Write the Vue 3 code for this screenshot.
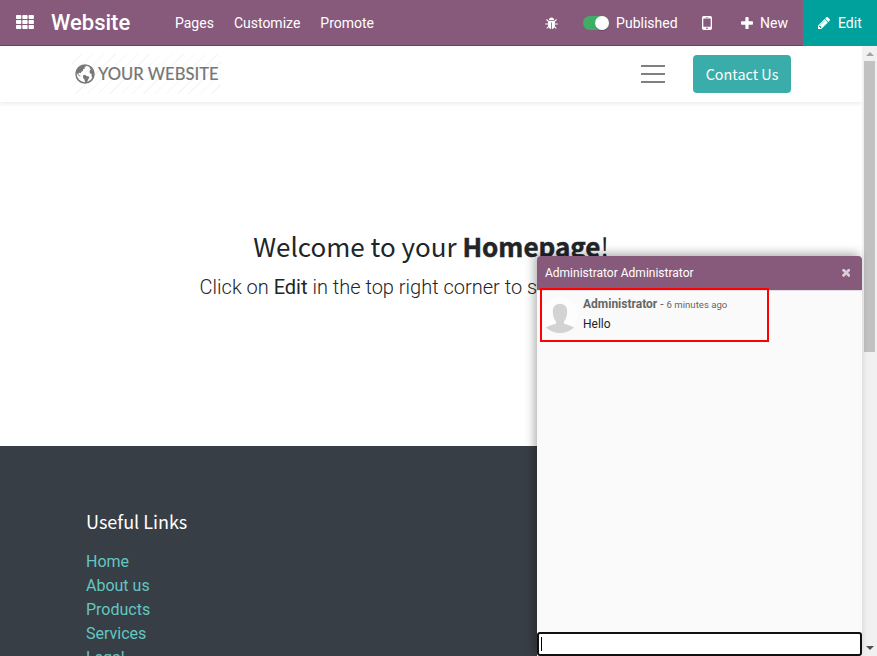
<script setup>
const menus = ['Pages', 'Customize', 'Promote']
const links = ['Home', 'About us', 'Products', 'Services', 'Legal']
</script>

<template>
  <div class="page">
    <nav class="topbar">
      <svg class="apps" viewBox="0 0 18 14">
        <template v-for="r in 3" :key="r">
          <rect v-for="c in 3" :key="c" :x="(c - 1) * 6.3" :y="(r - 1) * 5" width="5.3" height="4" rx=".8" />
        </template>
      </svg>
      <span class="brand">Website</span>
      <div class="menus"><a v-for="m in menus" :key="m">{{ m }}</a></div>
      <div class="tools">
        <svg class="bug" viewBox="0 0 13 13">
          <path d="M3.9 3.1a2.6 2.6 0 0 1 5.2 0z" />
          <path d="M3.1 3.7h6.8v5.1c0 2-1.4 3.2-3 3.3V5.4h-.8v6.7c-1.6-.1-3-1.3-3-3.3z" />
          <path class="legs" d="M3.4 4.4 1.5 2.5M9.6 4.4l1.9-1.9M3.2 7H.3M9.8 7h2.9M3.7 9.3l-2 2.2M9.3 9.3l2 2.2" />
        </svg>
        <span class="switch"><i></i></span>
        <span class="published">Published</span>
        <svg class="mobile" viewBox="0 0 10 14">
          <path fill-rule="evenodd" d="M1.7 0h6.6Q10 0 10 1.7v10.6Q10 14 8.3 14H1.7Q0 14 0 12.3V1.7Q0 0 1.7 0zM1.3 2.6v8.2h7.4V2.6zM3.7.9v.5h2.6V.9zM5 11.6a.8.8 0 1 0 .01 0z" />
        </svg>
        <svg class="plus" viewBox="192 128 1408 1408">
          <path d="M1600 736v192q0 40-28 68t-68 28h-416v416q0 40-28 68t-68 28h-192q-40 0-68-28t-28-68v-416h-416q-40 0-68-28t-28-68v-192q0-40 28-68t68-28h416v-416q0-40 28-68t68-28h192q40 0 68 28t28 68v416h416q40 0 68 28t28 68z" />
        </svg>
        <span class="new">New</span>
      </div>
      <div class="edit">
        <svg viewBox="128 149 1515 1515">
          <path d="M491 1536l91-91-235-235-91 91v107h128v128h107zm523-928q0-22-22-22-10 0-17 7l-542 542q-7 7-7 17 0 22 22 22 10 0 17-7l542-542q7-7 7-17zm-54-192l416 416-832 832h-416v-416zm683 96q0 53-37 90l-166 166-416-416 166-165q36-38 90-38 53 0 91 38l235 234q37 39 37 91z" />
        </svg>
        <span>Edit</span>
      </div>
    </nav>

    <div class="viewport">
      <div class="site">
        <header class="header">
          <div class="logo">
            <svg viewBox="0 0 20 20">
              <circle cx="10" cy="10" r="9" fill="none" stroke="#777" stroke-width="1.5" />
              <path d="M2 6.3 4.2 3 8 1.2l2.2.5.8 1.2-1.6.4.5 1.2-1.6.8-.5 1.6-1.8 1 .1 1.3-1.7-.5-1.2.8.7 1.5 1.7.6-.5.8-2-1.3L1.5 9z" />
              <path d="m8.1 11.2 2-.4 1.4 1.1 2.3.7.5 1.2-1.2 1.8-1 2.6-1.9.7-.7-3.5-1.5-1.7z" />
              <path d="m14.6 2.6 2.6 2.6 1.3 3.3-.1 3.6-1 2-.9-2.3.2-1.8-1.4-.4-.9-1.6.6-1.8.8-.7-.8-1z" />
            </svg>
            <span>YOUR WEBSITE</span>
          </div>
          <div class="burger"><i></i><i></i><i></i></div>
          <a class="contact">Contact Us</a>
        </header>
        <main class="hero">
          <h2>Welcome to your <b>Homepage</b>!</h2>
          <p>Click on <b>Edit</b> in the top right corner to start designing.</p>
        </main>
        <footer class="footer">
          <h5>Useful Links</h5>
          <a v-for="l in links" :key="l">{{ l }}</a>
        </footer>
      </div>
      <div class="scrollbar">
        <span class="arrow up"></span>
        <span class="thumb"></span>
        <span class="arrow down"></span>
      </div>
    </div>

    <section class="chat">
      <div class="chat-head">
        <span>Administrator Administrator</span>
        <svg viewBox="302 438 1188 1188">
          <path d="M1490 1322q0 40-28 68l-136 136q-28 28-68 28t-68-28l-294-294-294 294q-28 28-68 28t-68-28l-136-136q-28-28-28-68t28-68l294-294-294-294q-28-28-28-68t28-68l136-136q28-28 68-28t68 28l294 294 294-294q28-28 68-28t68 28l136 136q28 28 28 68t-28 68l-294 294 294 294q28 28 28 68z" />
        </svg>
      </div>
      <div class="chat-body">
        <div class="message">
          <svg class="avatar" viewBox="0 0 36 36">
            <circle cx="18" cy="18" r="18" fill="#fdfdfd" />
            <path d="M18 6.8c5 0 7.6 3.5 7.2 8.6-.3 4-1.5 7.2-3.3 9v2c2.3 1.300 7.300 1.700 10.100 4.100C28.500 34 23.500 36 18 36S7.500 34 4 30.500c2.800-2.400 7.800-2.800 10.100-4.100v-2c-1.800-1.800-3-5-3.300-9C10.400 10.300 13 6.800 18 6.800z" fill="#d3d3d3" />
          </svg>
          <div>
            <div class="meta"><b>Administrator</b> <span>-</span> <small>6 minutes ago</small></div>
            <div class="text">Hello</div>
          </div>
        </div>
      </div>
      <div class="composer"><i></i></div>
    </section>
  </div>
</template>

<style>
body { margin: 0; overflow: hidden; }
</style>

<style scoped>
* { box-sizing: border-box; }
.page { position: relative; width: 877px; height: 656px; overflow: hidden; display: flex; flex-direction: column; background: #fff; font-family: Roboto, sans-serif; font-size: 14px; color: #212529; }
.topbar { flex: none; height: 46px; display: flex; align-items: center; background: #875a7b; border-bottom: 1px solid #68465f; color: #fff; padding-left: 16px; }
.topbar svg { fill: #fff; flex: none; }
.apps { width: 18px; height: 14px; margin-top: -1px; }
.brand { width: 124px; margin-left: 17px; font-size: 22px; font-weight: 500; line-height: 45px; }
.menus { display: flex; gap: 20px; line-height: 46px; padding-top: 1px; }
.tools { display: flex; align-items: center; margin-left: auto; padding: 1px 15px 0 0; }
.bug { width: 13px; height: 13px; }
.legs { fill: none; stroke: #fff; stroke-width: 1.1; }
.switch { width: 26px; height: 14px; margin-left: 25px; border-radius: 7px; background: #40ad67; display: flex; justify-content: flex-end; }
.switch i { width: 14px; height: 14px; border-radius: 50%; background: #fff; box-shadow: 0 1px 1px rgba(0, 0, 0, .2); }
.published { margin-left: 7px; line-height: 18px; padding-bottom: 1px; }
.mobile { width: 10px; height: 14px; margin-left: 24px; }
.plus { width: 12px; height: 12px; margin-left: 29px; margin-top: -1px; }
.new { margin-left: 7.5px; line-height: 18px; padding-bottom: 1px; }
.edit { align-self: stretch; width: 74px; margin-bottom: -1px; padding: 0 0 0 15px; display: flex; align-items: center; gap: 8px; background: #00a09d; line-height: 18px; }
.edit span { padding-bottom: 1px; }
.edit svg { width: 12px; height: 12px; }
.viewport { flex: 1; display: flex; min-height: 0; }
.site { flex: 1; overflow: hidden; }
.header { position: relative; height: 56px; display: flex; align-items: center; padding: 0 71px; background: #fff; box-shadow: 0 2px 4px rgba(0, 0, 0, .075); }
.logo { width: 150px; height: 40px; display: flex; align-items: center; padding-left: 4px; color: #777; background: repeating-linear-gradient(135deg, #fff 0 7px, #f6f6f6 7px 8px); }
.logo svg { width: 20px; height: 20px; fill: #777; margin-right: 3px; }
.logo span { font-family: Lato, sans-serif; font-size: 16.6px; font-weight: 500; line-height: 20px; white-space: nowrap; -webkit-text-stroke: .1px #777; }
.burger { width: 24px; margin-left: auto; display: flex; flex-direction: column; gap: 6px; }
.burger i { height: 2px; background: #808080; }
.contact { width: 98px; height: 38px; margin-left: 28px; border-radius: 4px; background: #3aadaa; color: #fff; text-align: center; font: 14.4px/38px "Noto Sans CJK SC", sans-serif; }
.hero { height: 344px; padding-top: 124px; text-align: center; }
.hero h2 { margin: 0; font: 400 26px/40px "Noto Sans CJK SC", sans-serif; white-space: nowrap; }
.hero h2 b { font-weight: 700; -webkit-text-stroke: .5px #212529; }
.hero p { margin: 6px 0 0; font-size: 20px; line-height: 30px; font-weight: 300; white-space: nowrap; }
.hero p b { font-weight: 400; }
.footer { height: 300px; padding: 63px 86px; background: #383e45; }
.footer h5 { margin: 0 0 17px; color: #fff; font: 400 18px/24px "Noto Sans CJK SC", sans-serif; }
.footer a { display: block; color: #62c7c1; font-size: 16px; line-height: 24px; }
.scrollbar { width: 15px; background: #f1f1f1; display: flex; flex-direction: column; align-items: center; }
.arrow { border: 4px solid transparent; }
.up { margin-top: 2px; border-bottom-color: #a3a3a3; }
.thumb { width: 11px; height: 291px; margin-top: 5px; background: #c1c1c1; }
.down { margin-top: auto; margin-bottom: 2px; border-top-color: #505050; }
.chat { position: absolute; left: 537px; top: 256px; width: 325px; height: 400px; display: flex; flex-direction: column; background: #fafafa; border-radius: 4px 4px 0 0; box-shadow: -3px -3px 10px rgba(0, 0, 0, .3); }
.chat-head { flex: none; height: 34px; display: flex; align-items: center; justify-content: space-between; padding: 0 12px 0 8px; background: #875a7b; color: #fff; border-radius: 4px 4px 0 0; font-size: 12px; }
.chat-head svg { width: 8.5px; height: 8.5px; fill: #dbcdd8; }
.chat-body { flex: 1; padding-left: 3px; border-top: 1px solid #e0dfe3; }
.message { width: 229px; height: 54px; margin-top: -3px; border: 2px solid #f00; display: flex; padding: 7px 0 0; gap: 5px; }
.avatar { width: 36px; height: 36px; flex: none; }
.meta { display: flex; gap: 3px; font-size: 12px; line-height: 14px; color: #666; align-items: baseline; }
.meta b { font-weight: 700; }
.meta small { font-size: 9.6px; }
.text { margin-top: 5px; font-size: 12px; line-height: 14px; }
.composer { height: 24px; border: 2px solid #101010; border-radius: 3px; background: #fff; padding: 3px 2px; }
.composer i { display: block; width: 1px; height: 14px; background: #000; }
</style>
